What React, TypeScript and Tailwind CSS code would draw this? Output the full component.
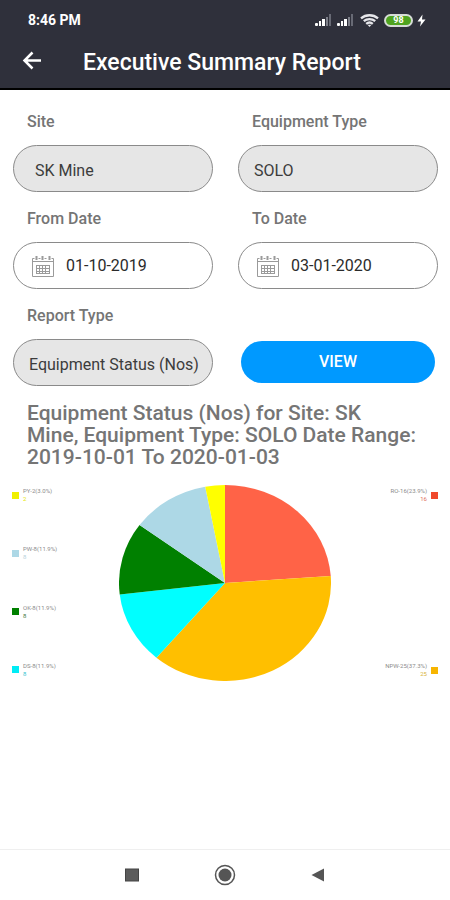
import { useId, useState } from "react";

type Slice = { code: string; count: number; percent: string; color: string; text: string; swatch: string };

const RIGHT: Slice[] = [
  { code: "RO", count: 16, percent: "23.9", color: "#ff6347", text: "text-[#e0705c]", swatch: "bg-[#f0492c]" },
  { code: "NPW", count: 25, percent: "37.3", color: "#ffbf00", text: "text-[#d9b53a]", swatch: "bg-[#f7b500]" },
];

const LEFT: Slice[] = [
  { code: "PY", count: 2, percent: "3.0", color: "#ffff00", text: "text-[#e6e600]", swatch: "bg-[#f0f000]" },
  { code: "PW", count: 8, percent: "11.9", color: "#add8e6", text: "text-[#b9d3dc]", swatch: "bg-[#add8e6]" },
  { code: "OK", count: 8, percent: "11.9", color: "#008000", text: "text-[#3f7a3f]", swatch: "bg-[#008000]" },
  { code: "DS", count: 8, percent: "11.9", color: "#00ffff", text: "text-[#35c4d0]", swatch: "bg-[#00ecf5]" },
];

const SLICES = [...RIGHT, ...[...LEFT].reverse()];

function slicePaths() {
  const total = SLICES.reduce((sum, s) => sum + s.count, 0);
  let run = 0;
  const at = (n: number) => {
    const a = (n / total) * Math.PI * 2;
    return `${(106 + 106 * Math.sin(a)).toFixed(2)} ${(98 - 98 * Math.cos(a)).toFixed(2)}`;
  };
  return SLICES.map((s) => {
    const start = at(run);
    run += s.count;
    return { color: s.color, code: s.code, d: `M106 98L${start}A106 98 0 0 1 ${at(run)}Z` };
  });
}

function Signal() {
  return (
    <svg width="17" height="12" viewBox="0 0 17 12" aria-hidden="true">
      <rect x="0" y="9" width="3" height="3" rx="1" fill="#fff" />
      <rect x="4" y="7" width="2" height="5" fill="#fff" />
      <rect x="7" y="5" width="3" height="7" fill="#fff" />
      <rect x="11" y="3" width="2" height="9" fill="#7c7e88" />
      <rect x="14" y="0" width="2" height="12" fill="#686a75" />
    </svg>
  );
}

function StatusBar() {
  return (
    <div className="flex h-10 items-center justify-between pr-6 pl-7 text-white">
      <span className="text-[14px] leading-5 font-bold">8:46 PM</span>
      <div className="flex items-center">
        <Signal />
        <span className="w-[5px]" />
        <Signal />
        <span className="w-[6px]" />
        <svg width="19" height="13" viewBox="0 0 19 13" fill="none" stroke="#e6e6ea" strokeWidth="2.300" aria-hidden="true">
          <path d="M1 4.400C5.800 0.200 13.200 0.200 18 4.400" />
          <path d="M3.800 7.200C7 4.300 12 4.300 15.200 7.200" />
          <path d="M6.200 9.900C8.200 8.200 10.800 8.200 12.800 9.900" />
          <path d="M7.500 10.800L9.500 13L11.500 10.800Z" fill="#e6e6ea" stroke="none" />
        </svg>
        <span className="w-[5px]" />
        <span className="flex h-[13px] w-[29px] items-center justify-center rounded-full border-2 border-[#d6dcd6] bg-[#4fa31f] text-[9px] leading-none font-bold">
          98
        </span>
        <svg width="9" height="13" viewBox="0 0 9 13" className="ml-1" fill="#fff" aria-hidden="true">
          <path d="M5.500 0.500L0.500 7.500H4L3 12.500L8.500 5.500H5Z" />
        </svg>
      </div>
    </div>
  );
}

const LABEL = "mb-[13px] pl-[14px] text-base leading-5 font-medium text-[#757575]";

function SelectField({ label, value, pad }: { label: string; value: string; pad: string }) {
  const id = useId();
  return (
    <div className="flex flex-col">
      <label htmlFor={id} className={LABEL}>
        {label}
      </label>
      <select
        id={id}
        defaultValue={value}
        className={`h-[47px] w-full appearance-none rounded-full border border-[#8a8a8a] bg-[#e6e6e6] pt-1 text-base text-[#3c3c3c] ${pad}`}
      >
        <option>{value}</option>
      </select>
    </div>
  );
}

function DateField({ label, initial }: { label: string; initial: string }) {
  const id = useId();
  const [value, setValue] = useState(initial);
  return (
    <div className="flex flex-col">
      <label htmlFor={id} className={LABEL}>
        {label}
      </label>
      <div className="flex h-[47px] items-center rounded-full border border-[#8a8a8a] bg-white pt-px pl-[18px]">
        <svg
          width="22"
          height="22"
          viewBox="0 0 22 22"
          fill="none"
          stroke="#9a9a9a"
          className="shrink-0"
          aria-hidden="true"
        >
          <path d="M.5 3.500V21.500H21.500V3.500M.5 6.500H21.500M.5 3.500H2.500M6.500 3.500H8.500M12.500 3.500H14.500M19.500 3.500H21.500" />
          <path d="M4.500 1V5M10.500 1V5M17.500 1V5" strokeWidth="2" />
          <path d="M4 10.500H18M4 13.500H18M4 16.500H18M4.500 10V19M7.500 10V19M10.500 10V19M13.500 10V19M17.500 10V19M4 18.500H18" />
        </svg>
        <input
          id={id}
          value={value}
          onChange={(e) => setValue(e.target.value)}
          className="ml-3 w-full min-w-0 bg-transparent text-base text-[#2b2b2b] outline-none"
        />
      </div>
    </div>
  );
}

function LegendItem({ slice, right }: { slice: Slice; right?: boolean }) {
  return (
    <li className={`flex items-center gap-1 ${right ? "flex-row-reverse text-right" : ""}`}>
      <span className={`size-[7px] ${slice.swatch}`} />
      <span className="flex flex-col text-[6px] leading-[8px]">
        <span className="text-[#8c8c8c]">{`${slice.code}-${slice.count}(${slice.percent}%)`}</span>
        <span className={slice.text}>{slice.count}</span>
      </span>
    </li>
  );
}

export default function App() {
  return (
    <div className="flex min-h-screen flex-col bg-white font-[Roboto,sans-serif]">
      <header className="border-b-2 border-black bg-[#2f303b] text-white">
        <StatusBar />
        <div className="flex h-12 items-start pl-[22px]">
          <button type="button" aria-label="Back" className="mt-[11px]">
            <svg width="20" height="20" viewBox="0 0 20 20" fill="none" stroke="#fff" strokeWidth="2.500" aria-hidden="true">
              <path d="M19 9.500H3M10.500 1.500L2.500 9.500L10.500 17.500" />
            </svg>
          </button>
          <h1 className="mt-[9px] ml-[41px] text-[23px] leading-7 font-medium">Executive Summary Report</h1>
        </div>
      </header>

      <main className="flex grow flex-col pt-[22px]">
        <form className="grid grid-cols-2 gap-x-[25px] gap-y-[17px] pr-3 pl-[13px]" onSubmit={(e) => e.preventDefault()}>
          <SelectField label="Site" value="SK Mine" pad="pl-[21px]" />
          <SelectField label="Equipment Type" value="SOLO" pad="pl-[15px]" />
          <DateField label="From Date" initial="01-10-2019" />
          <DateField label="To Date" initial="03-01-2020" />
          <SelectField label="Report Type" value="Equipment Status (Nos)" pad="pl-[15px]" />
          <div className="flex items-end px-[3px] pb-[3px]">
            <button type="submit" className="h-[42px] w-full rounded-full bg-[#0099ff] text-base font-medium text-white">
              VIEW
            </button>
          </div>
        </form>

        <h2 className="mt-4 pr-6 pl-[27px] text-[21px] leading-[22px] font-medium text-[#757575]">
          Equipment Status (Nos) for Site: SK
          <br />
          Mine, Equipment Type: SOLO Date Range:
          <br />
          2019-10-01 To 2020-01-03
        </h2>

        <section className="mt-[17px] flex justify-between px-3" aria-label="Equipment status chart">
          <ul className="flex w-[90px] flex-col justify-between pt-[2px] pb-[3px]">
            {LEFT.map((s) => (
              <LegendItem key={s.code} slice={s} />
            ))}
          </ul>
          <svg width="212" height="196" viewBox="0 0 212 196" role="img" aria-label="Pie chart of equipment status">
            {slicePaths().map((p) => (
              <path key={p.code} d={p.d} fill={p.color} />
            ))}
          </svg>
          <ul className="flex w-[90px] flex-col justify-between pt-[2px] pb-[3px]">
            {RIGHT.map((s) => (
              <LegendItem key={s.code} slice={s} right />
            ))}
          </ul>
        </section>
      </main>

      <nav className="flex h-[51px] items-center justify-center gap-[75px] border-t border-[#efefef]">
        <button type="button" aria-label="Recent apps">
          <svg width="14" height="14" viewBox="0 0 14 14">
            <rect x="0.500" y="1" width="13" height="12" fill="#5c5c5c" stroke="#444" />
          </svg>
        </button>
        <button type="button" aria-label="Home">
          <svg width="22" height="22" viewBox="0 0 22 22">
            <circle cx="11" cy="11" r="9.500" fill="none" stroke="#555" strokeWidth="1.500" />
            <circle cx="11" cy="11" r="6.500" fill="#555" />
          </svg>
        </button>
        <button type="button" aria-label="Back to previous screen">
          <svg width="14" height="14" viewBox="0 0 14 14">
            <path d="M0.500 7L13 0.500V13.500Z" fill="#555" />
          </svg>
        </button>
      </nav>
    </div>
  );
}
